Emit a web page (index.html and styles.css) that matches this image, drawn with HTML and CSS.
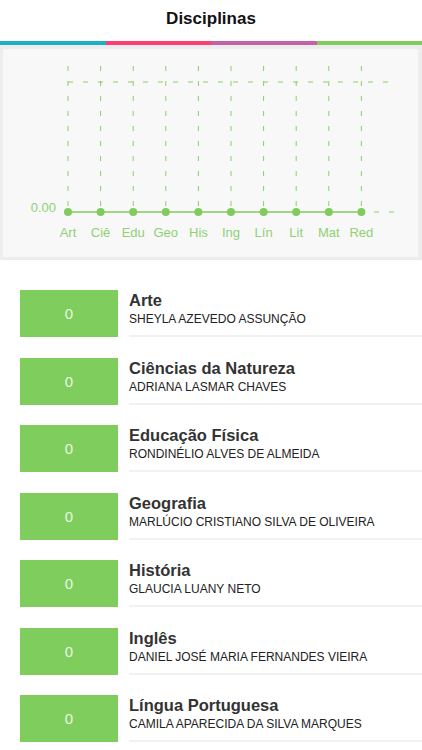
FILE: index.html
```html
<!DOCTYPE html>
<html lang="pt-BR">
<head>
    <meta charset="UTF-8">
    <meta name="viewport" content="width=device-width, initial-scale=1.0">
    <title>Disciplinas</title>
    <link rel="stylesheet" href="styles.css">
</head>
<body>
    <header class="top-bar">
        <h1>Disciplinas</h1>
    </header>
    <div class="color-strip">
        <span class="teal"></span>
        <span class="pink"></span>
        <span class="purple"></span>
        <span class="green"></span>
    </div>

    <div class="chart-frame">
        <div class="chart-panel">
            <svg class="chart" viewBox="0 0 415 208" width="415" height="208">
                <!-- grid -->
                <g class="grid">
                    <line x1="65" y1="17" x2="65" y2="163"/>
                    <line x1="97.6" y1="17" x2="97.6" y2="163"/>
                    <line x1="130.2" y1="17" x2="130.2" y2="163"/>
                    <line x1="162.8" y1="17" x2="162.8" y2="163"/>
                    <line x1="195.4" y1="17" x2="195.4" y2="163"/>
                    <line x1="228" y1="17" x2="228" y2="163"/>
                    <line x1="260.6" y1="17" x2="260.6" y2="163"/>
                    <line x1="293.2" y1="17" x2="293.2" y2="163"/>
                    <line x1="325.8" y1="17" x2="325.8" y2="163"/>
                    <line x1="358.4" y1="17" x2="358.4" y2="163"/>
                    <line class="h" x1="65" y1="33" x2="392" y2="33"/>
                    <line class="h" x1="371" y1="163" x2="392" y2="163"/>
                </g>
                <polyline class="series" points="65,163 358.4,163"/>
                <g class="dots">
                    <circle cx="65" cy="163" r="4"/>
                    <circle cx="97.6" cy="163" r="4"/>
                    <circle cx="130.2" cy="163" r="4"/>
                    <circle cx="162.8" cy="163" r="4"/>
                    <circle cx="195.4" cy="163" r="4"/>
                    <circle cx="228" cy="163" r="4"/>
                    <circle cx="260.6" cy="163" r="4"/>
                    <circle cx="293.2" cy="163" r="4"/>
                    <circle cx="325.8" cy="163" r="4"/>
                    <circle cx="358.4" cy="163" r="4"/>
                </g>
                <g class="labels">
                    <text class="y-label" x="53" y="160">0.00</text>
                    <text x="65" y="188">Art</text>
                    <text x="97.6" y="188">Ciê</text>
                    <text x="130.2" y="188">Edu</text>
                    <text x="162.8" y="188">Geo</text>
                    <text x="195.4" y="188">His</text>
                    <text x="228" y="188">Ing</text>
                    <text x="260.6" y="188">Lín</text>
                    <text x="293.2" y="188">Lit</text>
                    <text x="325.8" y="188">Mat</text>
                    <text x="358.4" y="188">Red</text>
                </g>
            </svg>
        </div>
    </div>

    <ul class="subject-list">
        <li class="subject">
            <div class="grade">0</div>
            <div class="info">
                <span class="name">Arte</span>
                <span class="teacher">SHEYLA AZEVEDO ASSUNÇÃO</span>
            </div>
        </li>
        <li class="subject">
            <div class="grade">0</div>
            <div class="info">
                <span class="name">Ciências da Natureza</span>
                <span class="teacher">ADRIANA LASMAR CHAVES</span>
            </div>
        </li>
        <li class="subject">
            <div class="grade">0</div>
            <div class="info">
                <span class="name">Educação Física</span>
                <span class="teacher">RONDINÉLIO ALVES DE ALMEIDA</span>
            </div>
        </li>
        <li class="subject">
            <div class="grade">0</div>
            <div class="info">
                <span class="name">Geografia</span>
                <span class="teacher">MARLÚCIO CRISTIANO SILVA DE OLIVEIRA</span>
            </div>
        </li>
        <li class="subject">
            <div class="grade">0</div>
            <div class="info">
                <span class="name">História</span>
                <span class="teacher">GLAUCIA LUANY NETO</span>
            </div>
        </li>
        <li class="subject">
            <div class="grade">0</div>
            <div class="info">
                <span class="name">Inglês</span>
                <span class="teacher">DANIEL JOSÉ MARIA FERNANDES VIEIRA</span>
            </div>
        </li>
        <li class="subject">
            <div class="grade">0</div>
            <div class="info">
                <span class="name">Língua Portuguesa</span>
                <span class="teacher">CAMILA APARECIDA DA SILVA MARQUES</span>
            </div>
        </li>
    </ul>
</body>
</html>
```

FILE: styles.css
```css
body {
    margin: 0;
    font-family: 'Liberation Sans', Arial, sans-serif;
    background: #fff;
    color: #222;
    overflow: hidden;
}

.top-bar {
    height: 41px;
    display: flex;
    align-items: center;
    justify-content: center;
}

.top-bar h1 {
    margin: 0;
    font-size: 17px;
    font-weight: bold;
    color: #111;
    padding-bottom: 4px;
}

.color-strip {
    display: flex;
    height: 4px;
}

.color-strip span {
    flex: 1;
}

.teal { background: #1bb0c3; }
.pink { background: #fe3f71; }
.purple { background: #c461a6; }
.green { background: #81cb5d; }

.chart-frame {
    background: #ededed;
    padding: 4px 4px 3px 3px;
}

.chart-panel {
    background: #f8f8f8;
    height: 208px;
}

.chart {
    display: block;
}

.grid line {
    stroke: #88cf6a;
    stroke-width: 1;
    stroke-dasharray: 5 10;
}

.series {
    fill: none;
    stroke: #7fcb5f;
    stroke-width: 1.5;
}

.dots circle {
    fill: #7fcb5f;
}

.labels text {
    font-family: 'Liberation Sans', Arial, sans-serif;
    font-size: 13px;
    fill: #8fd174;
    text-anchor: middle;
}

.labels .y-label {
    text-anchor: end;
    dominant-baseline: middle;
}

.subject-list {
    list-style: none;
    margin: 0;
    padding: 30px 0 0 20px;
}

.subject {
    display: flex;
    height: 47px;
    margin-bottom: 20.5px;
}

.grade {
    width: 98px;
    flex-shrink: 0;
    background: #7fcd5d;
    color: #e9f7e1;
    font-size: 15px;
    display: flex;
    align-items: center;
    justify-content: center;
}

.info {
    flex: 1;
    margin-left: 11px;
    border-bottom: 2px solid #f1f1f1;
    display: flex;
    flex-direction: column;
    padding-top: 1px;
}

.name {
    font-size: 16.5px;
    font-weight: bold;
    color: #333;
    line-height: 19px;
}

.teacher {
    font-size: 12px;
    color: #222;
    line-height: 15px;
    margin-top: 2px;
}
```
